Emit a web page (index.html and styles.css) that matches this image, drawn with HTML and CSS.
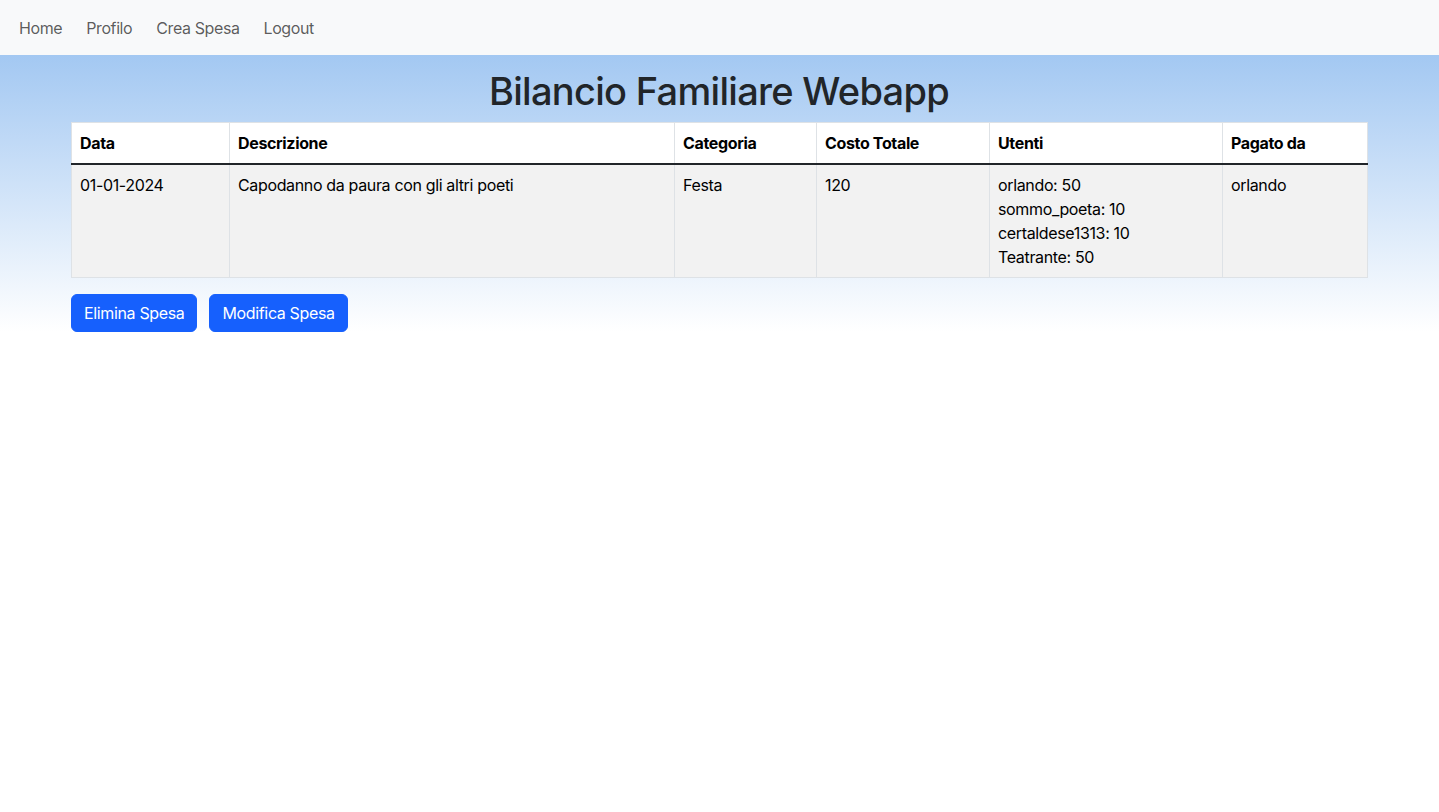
FILE: index.html
```html
<!DOCTYPE html>
<html lang="it">
<head>
<meta charset="utf-8">
<title>Bilancio Familiare Webapp</title>
<link rel="stylesheet" href="styles.css">
</head>
<body>
<nav class="navbar">
  <a class="nav-link" href="#">Home</a>
  <a class="nav-link" href="#">Profilo</a>
  <a class="nav-link" href="#">Crea Spesa</a>
  <a class="nav-link" href="#">Logout</a>
</nav>
<main class="hero">
  <div class="container">
    <h1 class="title">Bilancio Familiare Webapp</h1>
    <table class="table">
      <thead>
        <tr>
          <th class="c-data">Data</th>
          <th class="c-desc">Descrizione</th>
          <th class="c-cat">Categoria</th>
          <th class="c-costo">Costo Totale</th>
          <th class="c-utenti">Utenti</th>
          <th class="c-pagato">Pagato da</th>
        </tr>
      </thead>
      <tbody>
        <tr>
          <td>01-01-2024</td>
          <td>Capodanno da paura con gli altri poeti</td>
          <td>Festa</td>
          <td>120</td>
          <td>orlando: 50<br>sommo_poeta: 10<br>certaldese1313: 10<br>Teatrante: 50</td>
          <td>orlando</td>
        </tr>
      </tbody>
    </table>
    <div class="actions">
      <button class="btn">Elimina Spesa</button>
      <button class="btn">Modifica Spesa</button>
    </div>
  </div>
</main>
</body>
</html>
```
FILE: styles.css
```css
* { box-sizing: border-box; }
html, body {
  margin: 0;
  padding: 0;
  background: #fff;
  font-family: Inter, "Noto Sans", "Liberation Sans", sans-serif;
  font-size: 16px;
  line-height: 24px;
  color: #212529;
}
.navbar {
  height: 55px;
  background: #f8f9fa;
  display: flex;
  align-items: center;
  padding: 0 0 0 19px;
  gap: 24px;
}
.nav-link {
  color: rgba(0, 0, 0, 0.65);
  text-decoration: none;
  font-size: 16px;
  line-height: 24px;
  letter-spacing: -0.4px;
}
.hero {
  background: linear-gradient(to bottom, #a3c8f2 0%, #ffffff 100%);
  height: 277px;
}
.container {
  width: 1296px;
  margin: 0 0 0 71px;
  padding-top: 12px;
}
.title {
  margin: 0 0 7px;
  font-size: 38px;
  line-height: 48px;
  font-weight: 500;
  text-align: center;
  color: #212529;
  letter-spacing: -0.7px;
}
.table {
  width: 100%;
  border-collapse: collapse;
  table-layout: fixed;
  margin-bottom: 16px;
  color: #000;
  letter-spacing: -0.35px;
}
.table th, .table td {
  border: 1px solid #dee2e6;
  padding: 8px;
  text-align: left;
  vertical-align: top;
}
.table th {
  background: #fff;
  font-weight: 700;
}
.table thead tr th { border-bottom: 2px solid #212529; }
.table td { background: #f2f2f2; }
.c-data { width: 158px; }
.c-desc { width: 445px; }
.c-cat { width: 142px; }
.c-costo { width: 173px; }
.c-utenti { width: 233px; }
.c-pagato { width: 145px; }
.actions {
  display: flex;
  gap: 12px;
}
.btn {
  height: 38px;
  padding: 6px 12px;
  border: 1px solid #1660fd;
  background: #1660fd;
  color: #fff;
  font-family: inherit;
  font-size: 16px;
  line-height: 24px;
  border-radius: 6px;
  letter-spacing: -0.35px;
  cursor: pointer;
}
```
